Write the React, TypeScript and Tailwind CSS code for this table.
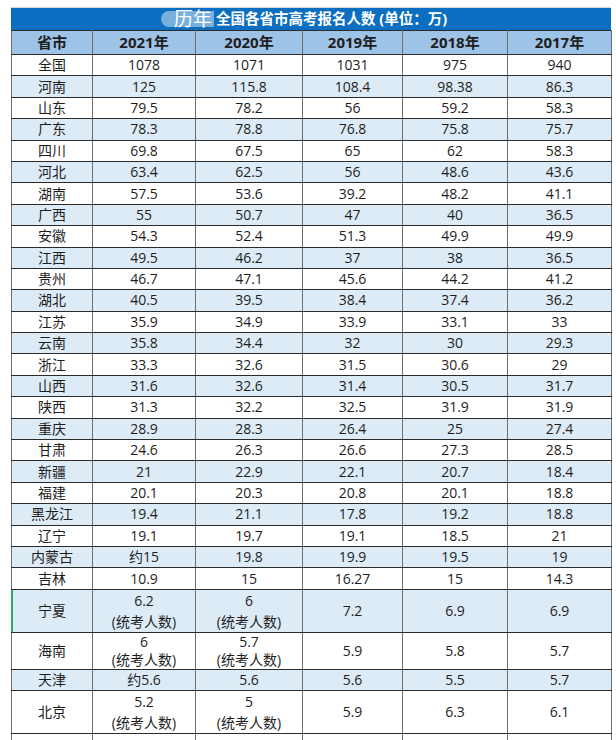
import React from "react";

type Row = {
  name: string;
  vals: string[];
  notes?: number[];
  h?: string;
  lead?: string;
  mark?: boolean;
};

const years = ["2021年", "2020年", "2019年", "2018年", "2017年"];

const rows: Row[] = [
  { name: "全国", vals: ["1078", "1071", "1031", "975", "940"] },
  { name: "河南", vals: ["125", "115.8", "108.4", "98.38", "86.3"] },
  { name: "山东", vals: ["79.5", "78.2", "56", "59.2", "58.3"] },
  { name: "广东", vals: ["78.3", "78.8", "76.8", "75.8", "75.7"] },
  { name: "四川", vals: ["69.8", "67.5", "65", "62", "58.3"] },
  { name: "河北", vals: ["63.4", "62.5", "56", "48.6", "43.6"] },
  { name: "湖南", vals: ["57.5", "53.6", "39.2", "48.2", "41.1"] },
  { name: "广西", vals: ["55", "50.7", "47", "40", "36.5"] },
  { name: "安徽", vals: ["54.3", "52.4", "51.3", "49.9", "49.9"] },
  { name: "江西", vals: ["49.5", "46.2", "37", "38", "36.5"] },
  { name: "贵州", vals: ["46.7", "47.1", "45.6", "44.2", "41.2"] },
  { name: "湖北", vals: ["40.5", "39.5", "38.4", "37.4", "36.2"] },
  { name: "江苏", vals: ["35.9", "34.9", "33.9", "33.1", "33"] },
  { name: "云南", vals: ["35.8", "34.4", "32", "30", "29.3"] },
  { name: "浙江", vals: ["33.3", "32.6", "31.5", "30.6", "29"] },
  { name: "山西", vals: ["31.6", "32.6", "31.4", "30.5", "31.7"] },
  { name: "陕西", vals: ["31.3", "32.2", "32.5", "31.9", "31.9"] },
  { name: "重庆", vals: ["28.9", "28.3", "26.4", "25", "27.4"] },
  { name: "甘肃", vals: ["24.6", "26.3", "26.6", "27.3", "28.5"] },
  { name: "新疆", vals: ["21", "22.9", "22.1", "20.7", "18.4"] },
  { name: "福建", vals: ["20.1", "20.3", "20.8", "20.1", "18.8"] },
  { name: "黑龙江", vals: ["19.4", "21.1", "17.8", "19.2", "18.8"] },
  { name: "辽宁", vals: ["19.1", "19.7", "19.1", "18.5", "21"] },
  { name: "内蒙古", vals: ["约15", "19.8", "19.9", "19.5", "19"] },
  { name: "吉林", vals: ["10.9", "15", "16.27", "15", "14.3"] },
  { name: "宁夏", vals: ["6.2", "6", "7.2", "6.9", "6.9"], notes: [0, 1], h: "h-[39px]", lead: "leading-[21px]", mark: true },
  { name: "海南", vals: ["6", "5.7", "5.9", "5.8", "5.7"], notes: [0, 1], h: "h-[36px]", lead: "leading-[18px]" },
  { name: "天津", vals: ["约5.6", "5.6", "5.6", "5.5", "5.7"], h: "h-[21px]" },
  { name: "北京", vals: ["5.2", "5", "5.9", "6.3", "6.1"], notes: [0, 1], h: "h-[39px]", lead: "leading-[21px]" },
];

const cell = "border-x border-y border-x-[#6e6e6e] border-y-[#2b2b2b] p-0 text-center align-middle";

export default function App() {
  return (
    <div className="min-h-screen bg-white pt-[7px] pl-[11px] text-[#1e1e1e] font-['Open_Sans','Noto_Sans_CJK_SC',sans-serif]">
      <div className="w-[600px]">
        {/* title bar */}
        <div className="h-[23px] border-t border-[#d6d6d6] bg-[#0b6ec0] flex items-center pl-[150px] text-white">
          <span className="flex items-center h-[16px] rounded-l-full bg-white/45 pl-[13px] pr-[2px] text-[19px] leading-none">
            历年
          </span>
          <span className="ml-[2px] text-[14.5px] font-bold leading-none">全国各省市高考报名人数 (单位：万)</span>
        </div>

        <table className="w-[600px] table-fixed border-collapse text-[14px]">
          <colgroup>
            <col className="w-[81px]" />
            <col className="w-[103px]" />
            <col className="w-[107px]" />
            <col className="w-[100px]" />
            <col className="w-[105px]" />
            <col className="w-[104px]" />
          </colgroup>
          <thead>
            <tr className="h-[24px] bg-[#9dc3e6]">
              <th className={`${cell} text-[15px] font-bold`}>省市</th>
              {years.map((y) => (
                <th key={y} className={`${cell} text-[15px] font-bold`}>
                  {y}
                </th>
              ))}
            </tr>
          </thead>
          <tbody>
            {rows.map((r, i) => (
              <tr key={r.name} className={`${r.h ?? "h-[21.4px]"} ${i % 2 === 1 ? "bg-[#ddebf7]" : "bg-white"}`}>
                <td className={`${cell} relative leading-[20px]`}>
                  {r.mark && <span className="absolute left-[-1px] top-0 bottom-0 w-[2px] bg-[#2ea86a]" />}
                  {r.name}
                </td>
                {r.vals.map((v, j) => (
                  <td key={j} className={`${cell} ${r.lead ?? "leading-[20px]"}`}>
                    {v}
                    {r.notes?.includes(j) && (
                      <>
                        <br />
                        (统考人数)
                      </>
                    )}
                  </td>
                ))}
              </tr>
            ))}
            <tr className="h-[14px]">
              {[0, 1, 2, 3, 4, 5].map((k) => (
                <td key={k} className="border-x border-t border-x-[#6e6e6e] border-t-[#2b2b2b] p-0" />
              ))}
            </tr>
          </tbody>
        </table>
      </div>
    </div>
  );
}
